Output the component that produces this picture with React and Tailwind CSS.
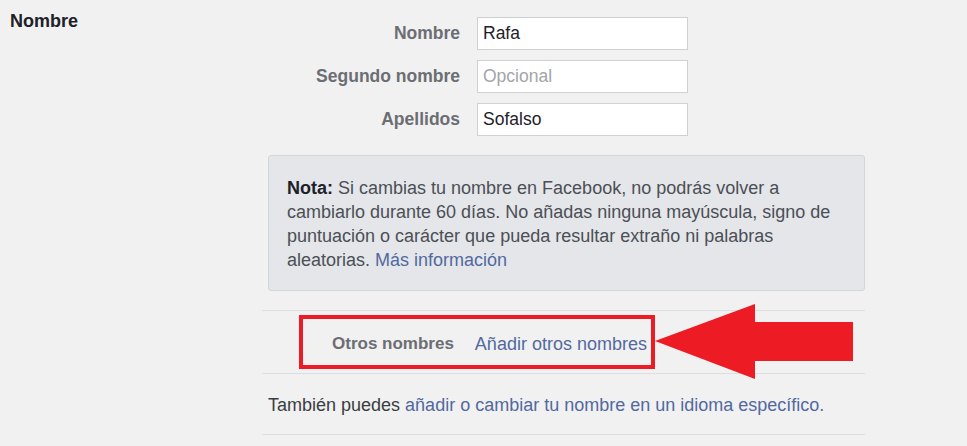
// App.jsx - Facebook "Nombre" settings panel with annotation

import React from 'react';

const fields = [
  { label: 'Nombre', value: 'Rafa' },
  { label: 'Segundo nombre', value: '', placeholder: 'Opcional' },
  { label: 'Apellidos', value: 'Sofalso' },
];

const App = () => {
  return (
    <div className="relative h-[446px] w-full overflow-hidden bg-[#f1f1f1] font-['Liberation_Sans',Arial,sans-serif]">
      <div className="flex">
        {/* Section title */}
        <div className="w-[262px] shrink-0 pl-[10px] pt-[10px]">
          <h2 className="text-[18px] font-bold leading-[22px] text-[#1d2129]">Nombre</h2>
        </div>

        {/* Section content */}
        <div className="w-[603px] pt-[17px]">
          <div className="flex flex-col gap-[10px]">
            {fields.map((f) => (
              <div key={f.label} className="flex items-center">
                <label className="w-[199px] pr-[1px] text-right text-[17.5px] font-bold text-[#6b6e73]">
                  {f.label}
                </label>
                <input
                  readOnly
                  value={f.value}
                  placeholder={f.placeholder}
                  className="ml-[16px] h-[33px] w-[211px] border border-[#cfd1d5] bg-white px-[5px] text-[17.5px] text-[#1d2129] placeholder:text-[#a3a5a8] outline-none"
                />
              </div>
            ))}
          </div>

          {/* Note */}
          <div className="ml-[6px] mt-[19px] w-[597px] rounded-[3px] border border-[#d3d6db] bg-[#e4e6e9] px-[18px] pb-[18px] pt-[20px] text-[18px] leading-[24px] text-[#4b4f56]">
            <span className="font-bold text-[#1d2129]">Nota:</span> Si cambias tu nombre en Facebook, no podrás volver a
            <br />
            cambiarlo durante 60 días. No añadas ninguna mayúscula, signo de
            <br />
            puntuación o carácter que pueda resultar extraño ni palabras
            <br />
            aleatorias. <span className="text-[#52699f]">Más información</span>
          </div>

          <div className="mt-[19px] border-t border-[#dcdee1]" />

          {/* Other names */}
          <div className="flex h-[62px] items-center pl-[70px] pt-[4px]">
            <span className="text-[17px] font-bold text-[#6b6e73]">Otros nombres</span>
            <span className="ml-[21px] text-[18px] text-[#52699f]">Añadir otros nombres</span>
          </div>

          <div className="border-t border-[#dcdee1]" />

          <div className="flex h-[60px] items-center pl-[6px] pt-[2px] text-[18px] text-[#3a3d42]">
            <span>
              También puedes <span className="text-[#52699f]">añadir o cambiar tu nombre en un idioma específico.</span>
            </span>
          </div>

          <div className="border-t border-[#dcdee1]" />
        </div>
      </div>

      {/* Annotation: red box */}
      <div className="pointer-events-none absolute left-[299px] top-[315px] h-[54px] w-[356px] border-[4px] border-[#ed1c24]" />

      {/* Annotation: arrow */}
      <svg
        className="pointer-events-none absolute left-0 top-0"
        width="967"
        height="446"
        viewBox="0 0 967 446"
      >
        <polygon
          points="655,341 755,304 755,322 853,322 853,361 755,361 755,379"
          fill="#ed1c24"
        />
      </svg>
    </div>
  );
};

export default App;
